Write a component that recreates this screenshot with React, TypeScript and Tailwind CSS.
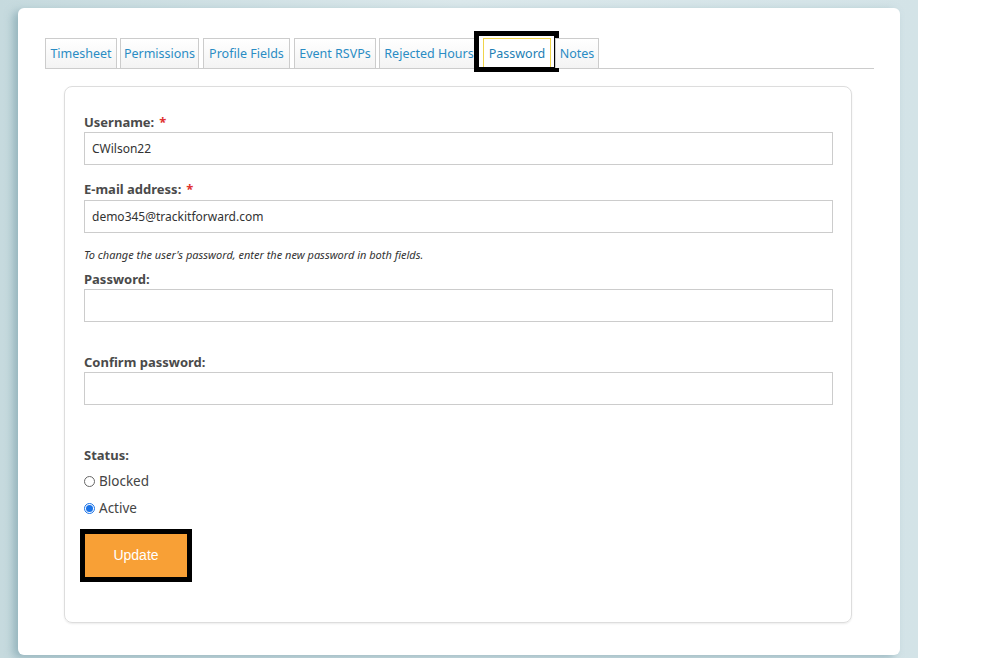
const tabs = [
  { label: "Timesheet", w: "w-[72px]", mr: "mr-[3px]" },
  { label: "Permissions", w: "w-[79px]", mr: "mr-[4px]" },
  { label: "Profile Fields", w: "w-[87px]", mr: "mr-[4px]" },
  { label: "Event RSVPs", w: "w-[82px]", mr: "mr-[3px]" },
  { label: "Rejected Hours", w: "w-[100px]", mr: "mr-[4px]" },
  { label: "Password", w: "w-[68px]", mr: "mr-[4px]", active: true },
  { label: "Notes", w: "w-[44px]", mr: "" },
];

function Label({ text, required }: { text: string; required?: boolean }) {
  return (
    <div className="h-[18px] leading-[18px] text-[13px] font-bold text-[#4a4a4a]">
      {text}
      {required && <span className="ml-[5px] text-[#e0312f]">*</span>}
    </div>
  );
}

function Field({ value }: { value?: string }) {
  return (
    <div className="h-[33px] w-[749px] border border-[#cccccc] bg-white px-[7px] text-[12px] leading-[31px] text-[#333]">
      {value}
    </div>
  );
}

function Radio({ label, checked }: { label: string; checked?: boolean }) {
  return (
    <div className="flex h-[18px] items-center text-[13.5px] text-[#444]">
      <span
        className={
          checked
            ? "mr-[4px] flex h-[11px] w-[11px] items-center justify-center rounded-full border border-[#1a73e8] bg-white"
            : "mr-[4px] h-[11px] w-[11px] rounded-full border border-[#666] bg-white"
        }
      >
        {checked && <span className="h-[7px] w-[7px] rounded-full bg-[#1a73e8]" />}
      </span>
      {label}
    </div>
  );
}

export default function App() {
  return (
    <div className="flex h-[658px] w-[981px] overflow-hidden bg-white" style={{ fontFamily: '"Noto Sans", "Open Sans", sans-serif' }}>
      <div className="h-[658px] w-[918px] bg-gradient-to-r from-[#c6dade] via-[#dbe8eb] to-[#d3e3e7] pl-[18px] pt-[8px]">
        <div className="h-[647px] w-[882px] rounded-[6px] bg-white pl-[27px] pt-[30px] shadow-[-5px_3px_8px_rgba(110,150,162,0.55)]">
          <div className="flex w-[829px] border-b border-[#cccccc]">
            {tabs.map((t) => (
              <div key={t.label} className={`relative ${t.w} ${t.mr}`}>
                <div
                  className={
                    t.active
                      ? "flex h-[29px] items-center justify-center border border-b-0 border-[#f0d44a] bg-white pt-[2px] text-[12.5px] text-[#1e7fb5]"
                      : "flex h-[30px] items-center justify-center border border-b-0 border-[#cccccc] bg-gradient-to-b from-white to-[#f3f3f3] pt-[2px] text-[12.5px] text-[#2a8cc4]"
                  }
                >
                  {t.label}
                </div>
                {t.active && (
                  <div className="absolute left-[-9px] top-[-7px] h-[41px] w-[85px] border-[5px] border-black" />
                )}
              </div>
            ))}
          </div>

          <div className="ml-[19px] mt-[17px] h-[537px] w-[788px] rounded-[8px] border border-[#dddddd] pl-[19px] pt-[26px] shadow-[0_1px_2px_rgba(0,0,0,0.08)]">
            <Label text="Username:" required />
            <div className="mt-[1px]">
              <Field value="CWilson22" />
            </div>
            <div className="mt-[15px]">
              <Label text="E-mail address:" required />
            </div>
            <div className="mt-[2px]">
              <Field value="demo345@trackitforward.com" />
            </div>
            <div className="mt-[15px] h-[14px] text-[11px] italic leading-[14px] text-[#333]">
              To change the user's password, enter the new password in both fields.
            </div>
            <div className="mt-[8px]">
              <Label text="Password:" />
            </div>
            <div className="mt-[1px]">
              <Field />
            </div>
            <div className="mt-[31px]">
              <Label text="Confirm password:" />
            </div>
            <div className="mt-[1px]">
              <Field />
            </div>
            <div className="mt-[41px]">
              <Label text="Status:" />
            </div>
            <div className="mt-[8px]">
              <Radio label="Blocked" />
            </div>
            <div className="mt-[9px]">
              <Radio label="Active" checked />
            </div>
            <div className="ml-[-4px] mt-[12px] h-[53px] w-[112px] border-[5px] border-black">
              <button
                className="h-full w-full bg-[#f8a036] text-[14px] text-white"
                style={{ fontFamily: '"Liberation Sans", Arial, sans-serif' }}
              >
                Update
              </button>
            </div>
          </div>
        </div>
      </div>
    </div>
  );
}
